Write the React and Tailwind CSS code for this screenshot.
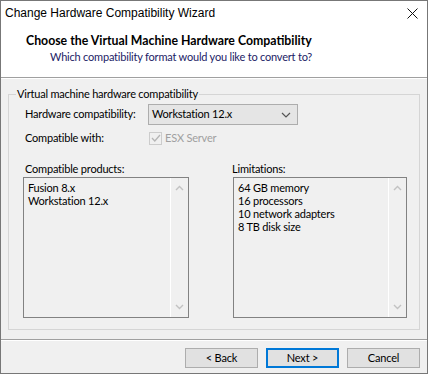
import React from 'react';

const uiFont = { fontFamily: 'Lato, "Liberation Sans", Arial, sans-serif' };
const titleFont = { fontFamily: '"Liberation Sans", Arial, sans-serif' };

const ScrollTrack = () => (
  <div className="w-[18px] h-full border-l border-white flex flex-col items-center justify-between py-[7px]">
    <svg width="9" height="6" viewBox="0 0 9 6">
      <path d="M1 5 L4.5 1.5 L8 5" fill="none" stroke="#c2c2c2" strokeWidth="1.4" />
    </svg>
    <svg width="9" height="6" viewBox="0 0 9 6">
      <path d="M1 1 L4.5 4.5 L8 1" fill="none" stroke="#c2c2c2" strokeWidth="1.4" />
    </svg>
  </div>
);

const ListBox = ({ items, width }) => (
  <div className={`flex h-[141px] border border-[#828282] bg-[#f0f0f0] ${width}`}>
    <div className="flex-1 pl-[4px] pt-[3px] leading-[13px] text-black">
      {items.map((it) => (
        <div key={it}>{it}</div>
      ))}
    </div>
    <ScrollTrack />
  </div>
);

const Button = ({ children, primary }) => (
  <button
    className={`w-[73px] h-[20px] bg-[#e1e1e1] text-black flex items-center justify-center ${
      primary ? 'border-2 border-[#0078d7]' : 'border border-[#adadad]'
    }`}
  >
    {children}
  </button>
);

export default function App() {
  return (
    <div style={uiFont} className="w-[428px] h-[374px] border border-[#777777] bg-[#f0f0f0] flex flex-col text-[11px] tracking-[-0.2px] text-black">
      {/* title + header */}
      <div className="h-[77px] bg-white border-b border-[#a0a0a0] flex flex-col">
        <div className="h-[24px] flex items-center justify-between pl-[4px] pr-[9px]">
          <span style={titleFont} className="text-[12px] tracking-normal">Change Hardware Compatibility Wizard</span>
          <svg width="11" height="11" viewBox="0 0 11 11">
            <path d="M0.5 0.5 L10.5 10.5 M10.5 0.5 L0.5 10.5" stroke="#111" strokeWidth="1" />
          </svg>
        </div>
        <div className="pl-[25px] pt-[8px] font-bold text-[12.3px] tracking-normal leading-[16px]">
          Choose the Virtual Machine Hardware Compatibility
        </div>
        <div className="pl-[49px] leading-[16px] text-[#1c1c66]">
          Which compatibility format would you like to convert to?
        </div>
      </div>
      <div className="h-px bg-white" />

      {/* body */}
      <fieldset className="mx-[7px] mt-[7px] h-[244px] border border-[#d5d5d5] pl-[16px] pr-[12px]">
        <legend className="-ml-[9px] px-[1px] leading-[16px]">Virtual machine hardware compatibility</legend>

        <div className="flex items-center mt-[2px]">
          <span className="w-[123px] whitespace-nowrap">Hardware compatibility:</span>
          <div className="w-[150px] h-[21px] bg-[#e5e5e5] border border-[#adadad] flex items-center justify-between pl-[3px] pr-[6px]">
            <span>Workstation 12.x</span>
            <svg width="10" height="6" viewBox="0 0 10 6">
              <path d="M1 1 L5 5 L9 1" fill="none" stroke="#555" strokeWidth="1.2" />
            </svg>
          </div>
        </div>

        <div className="flex items-center mt-[5px] h-[16px]">
          <span className="w-[124px] whitespace-nowrap">Compatible with:</span>
          <div className="w-[13px] h-[13px] border border-[#cccccc] bg-[#f0f0f0] flex items-center justify-center">
            <svg width="10" height="8" viewBox="0 0 10 8">
              <path d="M1 4 L3.8 7 L9 1" fill="none" stroke="#b5b5b5" strokeWidth="1.3" />
            </svg>
          </div>
          <span className="ml-[3px] text-[#a0a0a0]">ESX Server</span>
        </div>

        <div className="flex mt-[15px] -ml-[2px]">
          <div className="flex flex-col">
            <span className="pl-[2px] leading-[16px]">Compatible products:</span>
            <ListBox width="w-[166px]" items={['Fusion 8.x', 'Workstation 12.x']} />
          </div>
          <div className="flex flex-col ml-[44px]">
            <span className="leading-[16px] -ml-[1px]">Limitations:</span>
            <ListBox
              width="w-[174px]"
              items={['64 GB memory', '16 processors', '10 network adapters', '8 TB disk size']}
            />
          </div>
        </div>
      </fieldset>

      {/* footer */}
      <div className="mt-[9px] h-px bg-[#a0a0a0]" />
      <div className="h-px bg-white" />
      <div className="flex justify-end gap-[8px] pr-[7px] mt-[7px]">
        <Button>&lt; Back</Button>
        <Button primary>Next &gt;</Button>
        <Button>Cancel</Button>
      </div>
    </div>
  );
}
